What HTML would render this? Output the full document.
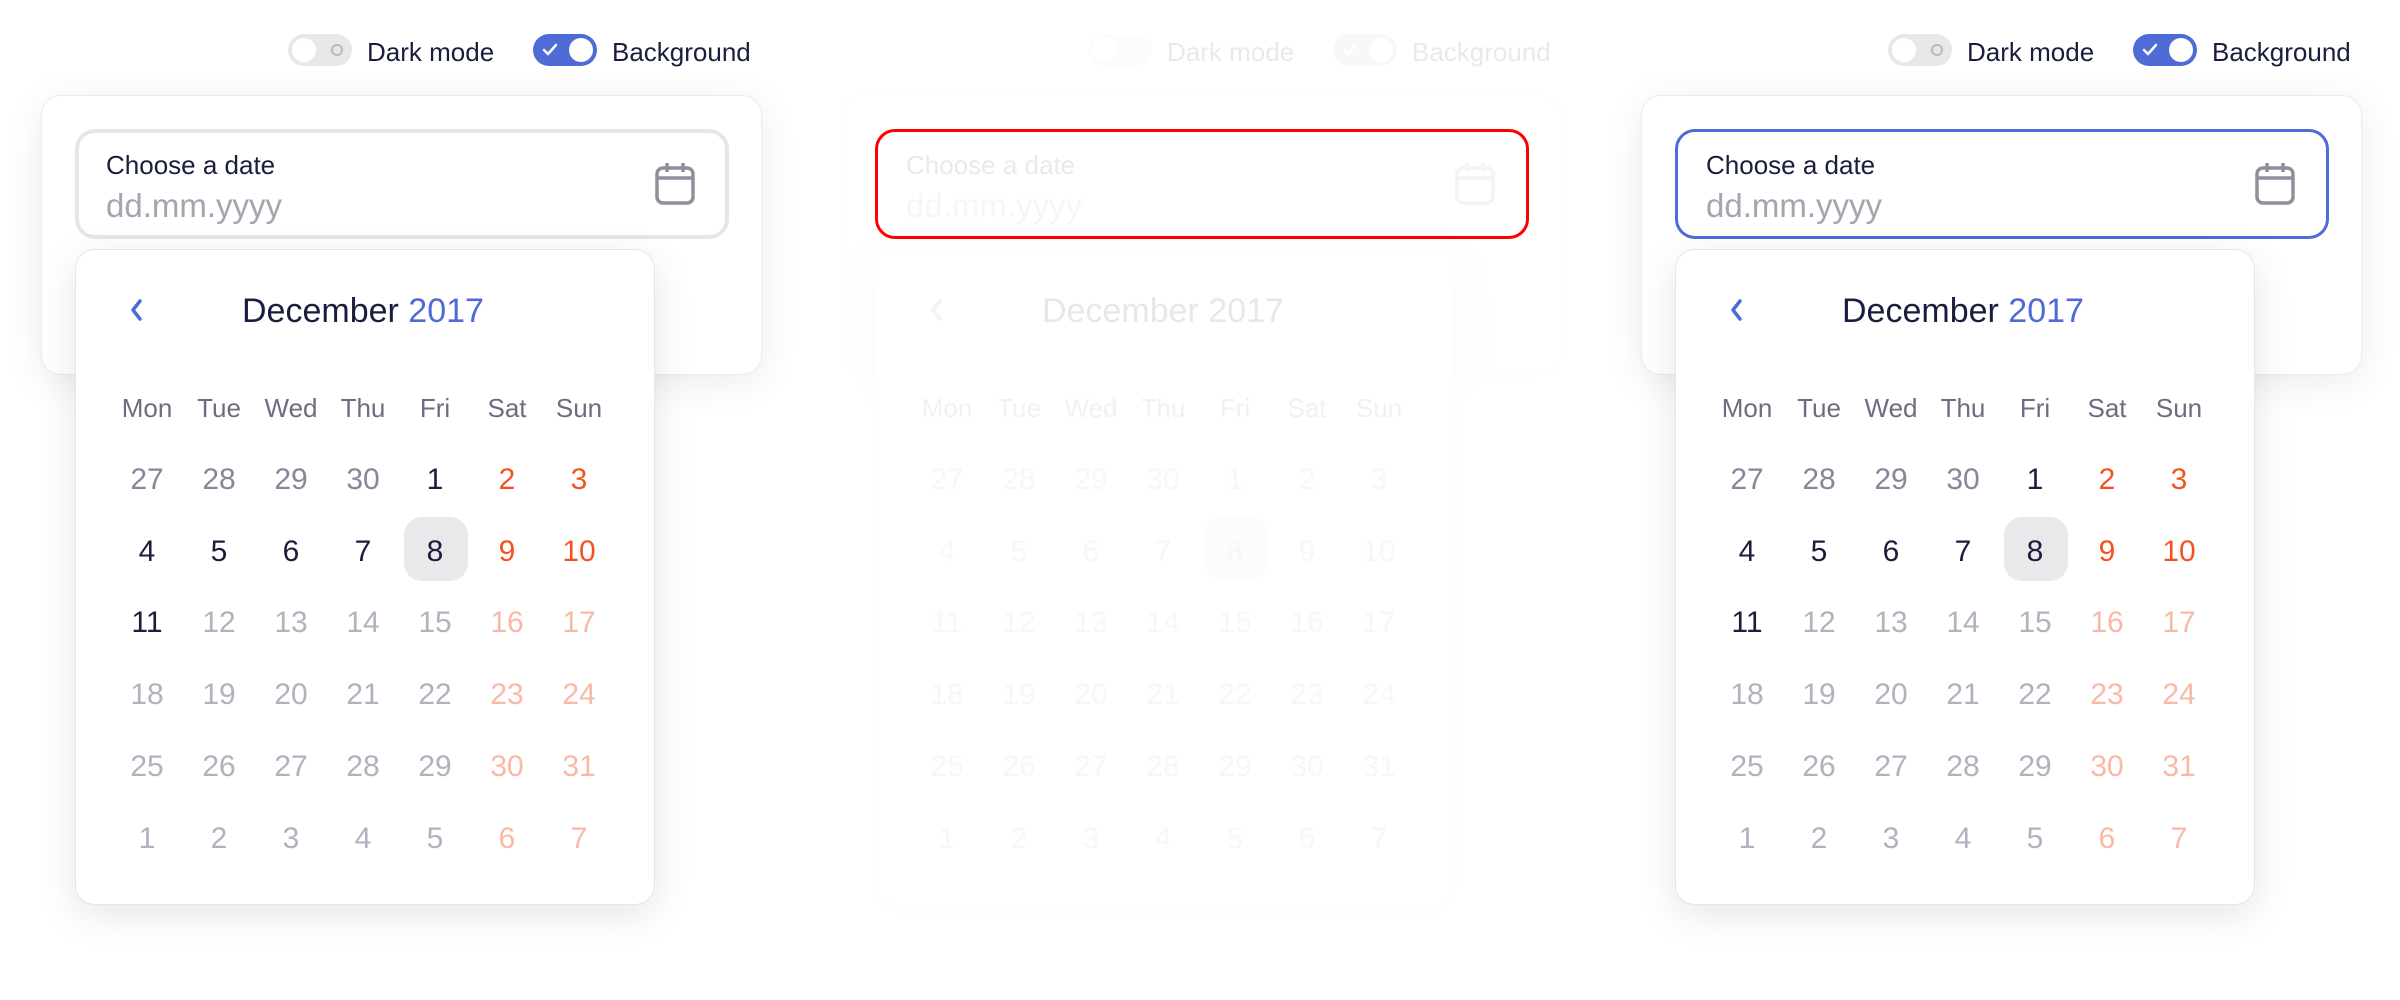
<!DOCTYPE html>
<html><head><meta charset="utf-8"><style>
*{box-sizing:border-box;margin:0;padding:0}
body{width:2400px;height:1000px;background:#fff;font-family:"Liberation Sans",sans-serif;position:relative;overflow:hidden}
.panel{position:absolute;top:0;width:800px;height:1000px}
.tg{position:absolute;top:34px;width:64px;height:32px;border-radius:16px}
.tg.off{background:#e8e8ea}
.tg.off .k{left:4px}
.tg.on{background:#4f6bd6}
.tg.on .k{right:4px}
.k{position:absolute;top:4px;width:24px;height:24px;border-radius:12px;background:#fff}
.tl{position:absolute;top:35px;font-size:26px;color:#1a1d3d;line-height:34px}
.card{position:absolute;left:41px;top:95px;width:721px;height:280px;border-radius:20px;background:#fff;border:1px solid #ececee;box-shadow:0 8px 40px rgba(0,0,0,.08)}
.inp{position:absolute;left:75px;top:129px;width:654px;height:110px;border-radius:20px;background:#fff;border:4px solid #e6e6e8}
.lab{position:absolute;left:106px;top:150px;font-size:26px;color:#1a1d3d}
.ph{position:absolute;left:106px;top:187px;font-size:33px;color:#a3a5b0}
.ic{position:absolute;left:654px;top:162px}
.pop{position:absolute;left:75px;top:249px;width:580px;height:656px;border-radius:20px;background:#fff;border:1px solid #e6e6e8;box-shadow:0 10px 40px rgba(0,0,0,.10)}
.hd{position:absolute;left:242px;top:292px;font-size:34px;color:#1a1d3d;white-space:nowrap}
.hd span{color:#4f6bd6}
.c{position:absolute;width:72px;margin-left:-36px;text-align:center;font-size:30px;line-height:40px;margin-top:2px}
.w{font-size:26px;color:#6b6e80}
.p{color:#868899}.d{color:#1a1d3d}.r{color:#f2541f}.g{color:#b0b2bd}.f{color:#f8b9a5}
.sel{position:absolute;left:404px;top:517px;width:64px;height:64px;border-radius:18px;background:#e9e9eb}
</style></head><body>

<div class="panel" style="left:0">
<div class="tg off" style="left:288px"><div class="k"></div><div style="position:absolute;right:9px;top:10px;width:12px;height:12px;border:2px solid #b8b9c0;border-radius:6px"></div></div>
<div class="tl" style="left:367px">Dark mode</div>
<div class="tg on" style="left:533px"><svg style="position:absolute;left:9px;top:9px" width="16" height="14" viewBox="0 0 16 14"><path d="M2 7l4 4 8-9" stroke="#fff" stroke-width="2.5" fill="none" stroke-linecap="round" stroke-linejoin="round"/></svg><div class="k"></div></div>
<div class="tl" style="left:612px">Background</div>
<div class="card"></div>
<div class="inp"></div>
<div class="lab">Choose a date</div>
<div class="ph">dd.mm.yyyy</div>
<svg class="ic" width="42" height="44" viewBox="0 0 42 44"><rect x="3" y="6" width="36" height="35" rx="6" fill="none" stroke="#8e909c" stroke-width="3.5"/><path d="M3 16h36M13 1v9M29 1v9" stroke="#8e909c" stroke-width="3.5"/></svg>
<div class="pop"></div>
<svg style="position:absolute;left:128px;top:298px" width="16" height="24" viewBox="0 0 16 24"><path d="M12 3L5 12l7 9" stroke="#4f6bd6" stroke-width="3.5" fill="none" stroke-linecap="round" stroke-linejoin="round"/></svg>
<div class="hd">December <span>2017</span></div>
<div class="sel"></div>
<div class="c w" style="left:147px;top:386px">Mon</div><div class="c w" style="left:219px;top:386px">Tue</div><div class="c w" style="left:291px;top:386px">Wed</div><div class="c w" style="left:363px;top:386px">Thu</div><div class="c w" style="left:435px;top:386px">Fri</div><div class="c w" style="left:507px;top:386px">Sat</div><div class="c w" style="left:579px;top:386px">Sun</div>
<div class="c p" style="left:147px;top:458px">27</div><div class="c p" style="left:219px;top:458px">28</div><div class="c p" style="left:291px;top:458px">29</div><div class="c p" style="left:363px;top:458px">30</div><div class="c d" style="left:435px;top:458px">1</div><div class="c r" style="left:507px;top:458px">2</div><div class="c r" style="left:579px;top:458px">3</div>
<div class="c d" style="left:147px;top:530px">4</div><div class="c d" style="left:219px;top:530px">5</div><div class="c d" style="left:291px;top:530px">6</div><div class="c d" style="left:363px;top:530px">7</div><div class="c d" style="left:435px;top:530px">8</div><div class="c r" style="left:507px;top:530px">9</div><div class="c r" style="left:579px;top:530px">10</div>
<div class="c d" style="left:147px;top:601px">11</div><div class="c g" style="left:219px;top:601px">12</div><div class="c g" style="left:291px;top:601px">13</div><div class="c g" style="left:363px;top:601px">14</div><div class="c g" style="left:435px;top:601px">15</div><div class="c f" style="left:507px;top:601px">16</div><div class="c f" style="left:579px;top:601px">17</div>
<div class="c g" style="left:147px;top:673px">18</div><div class="c g" style="left:219px;top:673px">19</div><div class="c g" style="left:291px;top:673px">20</div><div class="c g" style="left:363px;top:673px">21</div><div class="c g" style="left:435px;top:673px">22</div><div class="c f" style="left:507px;top:673px">23</div><div class="c f" style="left:579px;top:673px">24</div>
<div class="c g" style="left:147px;top:745px">25</div><div class="c g" style="left:219px;top:745px">26</div><div class="c g" style="left:291px;top:745px">27</div><div class="c g" style="left:363px;top:745px">28</div><div class="c g" style="left:435px;top:745px">29</div><div class="c f" style="left:507px;top:745px">30</div><div class="c f" style="left:579px;top:745px">31</div>
<div class="c g" style="left:147px;top:817px">1</div><div class="c g" style="left:219px;top:817px">2</div><div class="c g" style="left:291px;top:817px">3</div><div class="c g" style="left:363px;top:817px">4</div><div class="c g" style="left:435px;top:817px">5</div><div class="c f" style="left:507px;top:817px">6</div><div class="c f" style="left:579px;top:817px">7</div>
</div>

<div class="panel" style="left:800px">
<div style="opacity:.09">
<div class="tg off" style="left:288px"><div class="k"></div></div>
<div class="tl" style="left:367px">Dark mode</div>
<div class="tg off" style="left:533px;background:#bbb"><svg style="position:absolute;left:9px;top:9px" width="16" height="14" viewBox="0 0 16 14"><path d="M2 7l4 4 8-9" stroke="#fff" stroke-width="2.5" fill="none"/></svg><div class="k" style="left:auto;right:4px"></div></div>
<div class="tl" style="left:612px">Background</div>
<div class="card"></div>
<div class="pop"></div>
<div class="lab">Choose a date</div>
<div class="ph">dd.mm.yyyy</div>
<svg class="ic" width="42" height="44" viewBox="0 0 42 44"><rect x="3" y="6" width="36" height="35" rx="6" fill="none" stroke="#8e909c" stroke-width="3.5"/><path d="M3 16h36M13 1v9M29 1v9" stroke="#8e909c" stroke-width="3.5"/></svg>
<svg style="position:absolute;left:128px;top:298px" width="16" height="24" viewBox="0 0 16 24"><path d="M12 3L5 12l7 9" stroke="#888" stroke-width="3.5" fill="none" stroke-linecap="round" stroke-linejoin="round"/></svg>
<div class="hd" style="color:#000">December 2017</div>
<div class="sel"></div>
<div class="c w" style="left:147px;top:386px">Mon</div><div class="c w" style="left:219px;top:386px">Tue</div><div class="c w" style="left:291px;top:386px">Wed</div><div class="c w" style="left:363px;top:386px">Thu</div><div class="c w" style="left:435px;top:386px">Fri</div><div class="c w" style="left:507px;top:386px">Sat</div><div class="c w" style="left:579px;top:386px">Sun</div>
<div class="c g" style="left:147px;top:458px">27</div><div class="c g" style="left:219px;top:458px">28</div><div class="c g" style="left:291px;top:458px">29</div><div class="c g" style="left:363px;top:458px">30</div><div class="c g" style="left:435px;top:458px">1</div><div class="c g" style="left:507px;top:458px">2</div><div class="c g" style="left:579px;top:458px">3</div>
<div class="c g" style="left:147px;top:530px">4</div><div class="c g" style="left:219px;top:530px">5</div><div class="c g" style="left:291px;top:530px">6</div><div class="c g" style="left:363px;top:530px">7</div><div class="c g" style="left:435px;top:530px">8</div><div class="c g" style="left:507px;top:530px">9</div><div class="c g" style="left:579px;top:530px">10</div>
<div class="c g" style="left:147px;top:601px">11</div><div class="c g" style="left:219px;top:601px">12</div><div class="c g" style="left:291px;top:601px">13</div><div class="c g" style="left:363px;top:601px">14</div><div class="c g" style="left:435px;top:601px">15</div><div class="c g" style="left:507px;top:601px">16</div><div class="c g" style="left:579px;top:601px">17</div>
<div class="c g" style="left:147px;top:673px">18</div><div class="c g" style="left:219px;top:673px">19</div><div class="c g" style="left:291px;top:673px">20</div><div class="c g" style="left:363px;top:673px">21</div><div class="c g" style="left:435px;top:673px">22</div><div class="c g" style="left:507px;top:673px">23</div><div class="c g" style="left:579px;top:673px">24</div>
<div class="c g" style="left:147px;top:745px">25</div><div class="c g" style="left:219px;top:745px">26</div><div class="c g" style="left:291px;top:745px">27</div><div class="c g" style="left:363px;top:745px">28</div><div class="c g" style="left:435px;top:745px">29</div><div class="c g" style="left:507px;top:745px">30</div><div class="c g" style="left:579px;top:745px">31</div>
<div class="c g" style="left:147px;top:817px">1</div><div class="c g" style="left:219px;top:817px">2</div><div class="c g" style="left:291px;top:817px">3</div><div class="c g" style="left:363px;top:817px">4</div><div class="c g" style="left:435px;top:817px">5</div><div class="c g" style="left:507px;top:817px">6</div><div class="c g" style="left:579px;top:817px">7</div>
</div>
<div class="inp" style="border:3px solid #ff0000;background:transparent"></div>
</div>

<div class="panel" style="left:1600px">
<div class="tg off" style="left:288px"><div class="k"></div><div style="position:absolute;right:9px;top:10px;width:12px;height:12px;border:2px solid #b8b9c0;border-radius:6px"></div></div>
<div class="tl" style="left:367px">Dark mode</div>
<div class="tg on" style="left:533px"><svg style="position:absolute;left:9px;top:9px" width="16" height="14" viewBox="0 0 16 14"><path d="M2 7l4 4 8-9" stroke="#fff" stroke-width="2.5" fill="none" stroke-linecap="round" stroke-linejoin="round"/></svg><div class="k"></div></div>
<div class="tl" style="left:612px">Background</div>
<div class="card"></div>
<div class="inp" style="border-color:#4f6bd6;border-width:3px"></div>
<div class="lab">Choose a date</div>
<div class="ph">dd.mm.yyyy</div>
<svg class="ic" width="42" height="44" viewBox="0 0 42 44"><rect x="3" y="6" width="36" height="35" rx="6" fill="none" stroke="#8e909c" stroke-width="3.5"/><path d="M3 16h36M13 1v9M29 1v9" stroke="#8e909c" stroke-width="3.5"/></svg>
<div class="pop"></div>
<svg style="position:absolute;left:128px;top:298px" width="16" height="24" viewBox="0 0 16 24"><path d="M12 3L5 12l7 9" stroke="#4f6bd6" stroke-width="3.5" fill="none" stroke-linecap="round" stroke-linejoin="round"/></svg>
<div class="hd">December <span>2017</span></div>
<div class="sel"></div>
<div class="c w" style="left:147px;top:386px">Mon</div><div class="c w" style="left:219px;top:386px">Tue</div><div class="c w" style="left:291px;top:386px">Wed</div><div class="c w" style="left:363px;top:386px">Thu</div><div class="c w" style="left:435px;top:386px">Fri</div><div class="c w" style="left:507px;top:386px">Sat</div><div class="c w" style="left:579px;top:386px">Sun</div>
<div class="c p" style="left:147px;top:458px">27</div><div class="c p" style="left:219px;top:458px">28</div><div class="c p" style="left:291px;top:458px">29</div><div class="c p" style="left:363px;top:458px">30</div><div class="c d" style="left:435px;top:458px">1</div><div class="c r" style="left:507px;top:458px">2</div><div class="c r" style="left:579px;top:458px">3</div>
<div class="c d" style="left:147px;top:530px">4</div><div class="c d" style="left:219px;top:530px">5</div><div class="c d" style="left:291px;top:530px">6</div><div class="c d" style="left:363px;top:530px">7</div><div class="c d" style="left:435px;top:530px">8</div><div class="c r" style="left:507px;top:530px">9</div><div class="c r" style="left:579px;top:530px">10</div>
<div class="c d" style="left:147px;top:601px">11</div><div class="c g" style="left:219px;top:601px">12</div><div class="c g" style="left:291px;top:601px">13</div><div class="c g" style="left:363px;top:601px">14</div><div class="c g" style="left:435px;top:601px">15</div><div class="c f" style="left:507px;top:601px">16</div><div class="c f" style="left:579px;top:601px">17</div>
<div class="c g" style="left:147px;top:673px">18</div><div class="c g" style="left:219px;top:673px">19</div><div class="c g" style="left:291px;top:673px">20</div><div class="c g" style="left:363px;top:673px">21</div><div class="c g" style="left:435px;top:673px">22</div><div class="c f" style="left:507px;top:673px">23</div><div class="c f" style="left:579px;top:673px">24</div>
<div class="c g" style="left:147px;top:745px">25</div><div class="c g" style="left:219px;top:745px">26</div><div class="c g" style="left:291px;top:745px">27</div><div class="c g" style="left:363px;top:745px">28</div><div class="c g" style="left:435px;top:745px">29</div><div class="c f" style="left:507px;top:745px">30</div><div class="c f" style="left:579px;top:745px">31</div>
<div class="c g" style="left:147px;top:817px">1</div><div class="c g" style="left:219px;top:817px">2</div><div class="c g" style="left:291px;top:817px">3</div><div class="c g" style="left:363px;top:817px">4</div><div class="c g" style="left:435px;top:817px">5</div><div class="c f" style="left:507px;top:817px">6</div><div class="c f" style="left:579px;top:817px">7</div>
</div>
</body></html>
